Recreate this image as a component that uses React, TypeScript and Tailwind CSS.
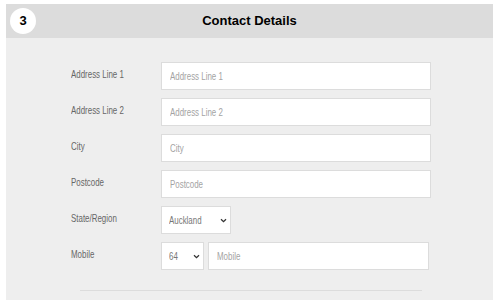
const font = { fontFamily: '"Liberation Sans", Arial, sans-serif' }

const textRows = [
  { label: 'Address Line 1', placeholder: 'Address Line 1' },
  { label: 'Address Line 2', placeholder: 'Address Line 2' },
  { label: 'City', placeholder: 'City' },
  { label: 'Postcode', placeholder: 'Postcode' }
]

// the original uses a condensed face; squeeze Liberation Sans to match its widths
function Narrow({ children }: { children: React.ReactNode }) {
  return <span className="inline-block origin-left scale-x-[0.72] whitespace-nowrap">{children}</span>
}

function Label({ children }: { children: React.ReactNode }) {
  return (
    <div className="h-[28px] flex items-center pb-[3px] text-[11px] text-[#666]">
      <Narrow>{children}</Narrow>
    </div>
  )
}

function TextField({ placeholder, width }: { placeholder: string; width: string }) {
  return (
    <label className={`relative ${width} h-[28px] bg-white border border-[#dcdcdc] flex items-center`}>
      <input aria-label={placeholder} className="absolute inset-0 w-full h-full bg-transparent px-[8px] outline-none text-[11px]" />
      <span className="pl-[8px] pt-[1px] text-[11px] text-[#a3a3a3] pointer-events-none">
        <Narrow>{placeholder}</Narrow>
      </span>
    </label>
  )
}

function Select({ value, width }: { value: string; width: string }) {
  return (
    <div className={`${width} h-[28px] bg-white border border-[#dcdcdc] flex items-center justify-between pl-[7px] pr-[3px] text-[11px] text-[#777]`}>
      <Narrow>{value}</Narrow>
      <svg width="7" height="5" viewBox="0 0 7 5" className="shrink-0">
        <path d="M1 1.2 L3.5 3.6 L6 1.2" fill="none" stroke="#333" strokeWidth="1.3" />
      </svg>
    </div>
  )
}

export default function App() {
  return (
    <div className="min-h-screen bg-white pt-[4px] px-[6px]" style={font}>
      <div className="w-[487px] bg-[#eeeeee] h-[296px]">
        {/* Header */}
        <div className="h-[34px] bg-[#dcdcdc] grid grid-cols-[40px_1fr_40px] items-center">
          <div className="pl-[4px]">
            <div className="w-[26px] h-[26px] rounded-full bg-white flex items-center justify-center text-[13px] font-bold text-black">3</div>
          </div>
          <h2 className="text-center text-[13px] font-bold text-black">Contact Details</h2>
          <div />
        </div>

        {/* Form */}
        <div className="pt-[24px] pl-[65px] grid grid-cols-[90px_270px] gap-y-[8px]">
          {textRows.map((row) => (
            <div key={row.label} className="contents">
              <Label>{row.label}</Label>
              <TextField placeholder={row.placeholder} width="w-[270px]" />
            </div>
          ))}
          <Label>State/Region</Label>
          <Select value="Auckland" width="w-[70px]" />
          <Label>Mobile</Label>
          <div className="flex gap-[4px]">
            <Select value="64" width="w-[43px]" />
            <TextField placeholder="Mobile" width="w-[221px]" />
          </div>
        </div>

        <div className="mt-[20px] ml-[74px] mr-[71px] border-t border-[#dcdcdc]" />
      </div>
    </div>
  )
}
